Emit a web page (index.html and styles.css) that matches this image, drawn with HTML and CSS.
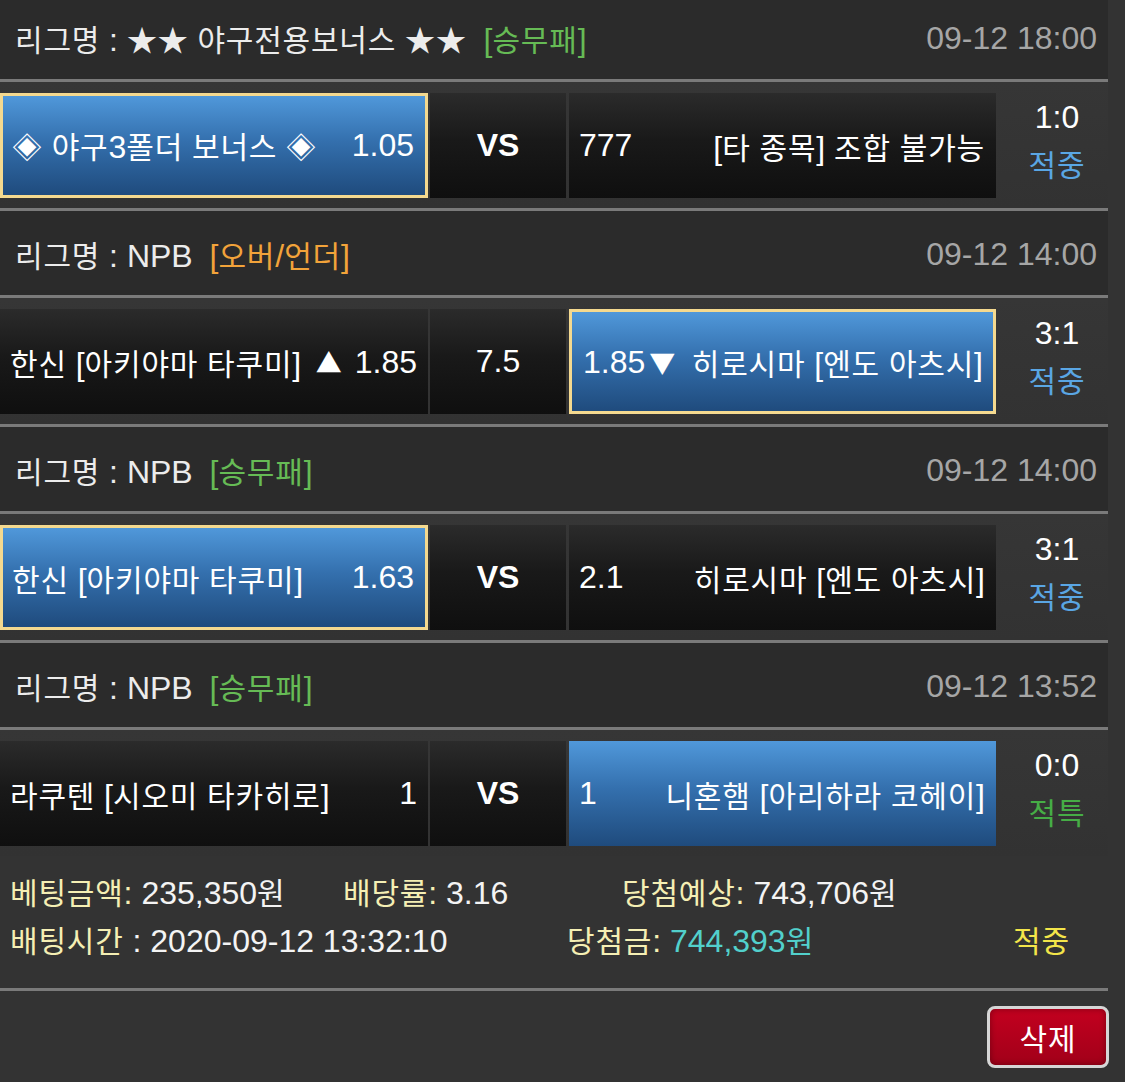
FILE: index.html
```html
<!DOCTYPE html>
<html lang="ko">
<head>
<meta charset="utf-8">
<title>배팅내역</title>
<link rel="stylesheet" href="styles.css">
</head>
<body>
<div class="slip">

  <div class="game">
    <div class="league">
      <div class="league-name"><span class="k">리그명</span> : <span class="k">★★</span> <span class="k">야구전용보너스</span> <span class="k">★★</span> <span class="tag green">[<span class="k">승무패</span>]</span></div>
      <div class="time">09-12 18:00</div>
    </div>
    <div class="match">
      <div class="cell team left blue picked">
        <span class="name"><span class="k">◈</span> <span class="k">야구</span>3<span class="k">폴더</span> <span class="k">보너스</span> <span class="k">◈</span></span>
        <span class="odd">1.05</span>
      </div>
      <div class="cell mid"><span class="vs">VS</span></div>
      <div class="cell team right">
        <span class="odd">777</span>
        <span class="name">[<span class="k">타</span> <span class="k">종목</span>] <span class="k">조합</span> <span class="k">불가능</span></span>
      </div>
      <div class="result"><div class="score">1:0</div><div class="k st hit">적중</div></div>
    </div>
  </div>

  <div class="game">
    <div class="league">
      <div class="league-name"><span class="k">리그명</span> : NPB <span class="tag orange">[<span class="k">오버</span>/<span class="k">언더</span>]</span></div>
      <div class="time">09-12 14:00</div>
    </div>
    <div class="match">
      <div class="cell team left">
        <span class="name"><span class="k">한신</span> [<span class="k">아키야마</span> <span class="k">타쿠미</span>]</span>
        <span class="odd"><span class="k tri">▲</span> 1.85</span>
      </div>
      <div class="cell mid"><span class="line">7.5</span></div>
      <div class="cell team right blue picked">
        <span class="odd">1.85<span class="k tri">▼</span></span>
        <span class="name"><span class="k">히로시마</span> [<span class="k">엔도</span> <span class="k">아츠시</span>]</span>
      </div>
      <div class="result"><div class="score">3:1</div><div class="k st hit">적중</div></div>
    </div>
  </div>

  <div class="game">
    <div class="league">
      <div class="league-name"><span class="k">리그명</span> : NPB <span class="tag green">[<span class="k">승무패</span>]</span></div>
      <div class="time">09-12 14:00</div>
    </div>
    <div class="match">
      <div class="cell team left blue picked">
        <span class="name"><span class="k">한신</span> [<span class="k">아키야마</span> <span class="k">타쿠미</span>]</span>
        <span class="odd">1.63</span>
      </div>
      <div class="cell mid"><span class="vs">VS</span></div>
      <div class="cell team right">
        <span class="odd">2.1</span>
        <span class="name"><span class="k">히로시마</span> [<span class="k">엔도</span> <span class="k">아츠시</span>]</span>
      </div>
      <div class="result"><div class="score">3:1</div><div class="k st hit">적중</div></div>
    </div>
  </div>

  <div class="game last">
    <div class="league">
      <div class="league-name"><span class="k">리그명</span> : NPB <span class="tag green">[<span class="k">승무패</span>]</span></div>
      <div class="time">09-12 13:52</div>
    </div>
    <div class="match">
      <div class="cell team left">
        <span class="name"><span class="k">라쿠텐</span> [<span class="k">시오미</span> <span class="k">타카히로</span>]</span>
        <span class="odd">1</span>
      </div>
      <div class="cell mid"><span class="vs">VS</span></div>
      <div class="cell team right blue">
        <span class="odd">1</span>
        <span class="name"><span class="k">니혼햄</span> [<span class="k">아리하라</span> <span class="k">코헤이</span>]</span>
      </div>
      <div class="result"><div class="score">0:0</div><div class="k st special">적특</div></div>
    </div>
  </div>

  <div class="summary">
    <div class="sum-line">
      <span class="c1"><span class="lab"><span class="k">베팅금액</span>:</span> 235,350<span class="k">원</span></span>
      <span class="c2"><span class="lab"><span class="k">배당률</span>:</span> 3.16</span>
      <span class="c3"><span class="lab"><span class="k">당첨예상</span>:</span> 743,706<span class="k">원</span></span>
    </div>
    <div class="sum-line">
      <span class="d1"><span class="lab"><span class="k">배팅시간</span></span> : 2020-09-12 13:32:10</span>
      <span class="d2"><span class="lab"><span class="k">당첨금</span>:</span> <span class="won">744,393<span class="k">원</span></span></span>
      <span class="d3"><span class="k">적중</span></span>
    </div>
  </div>

  <div class="footer">
    <button class="del" type="button"><span class="k">삭제</span></button>
  </div>

</div>
</body>
</html>
```

FILE: styles.css
```css
* { box-sizing: border-box; }
html, body { margin: 0; padding: 0; }
body {
  background: #333333;
  font-family: "Liberation Sans", Arial, "Noto Sans CJK KR", sans-serif;
  font-size: 32px;
  color: #f4f4f4;
  overflow: hidden;
  height: 1082px;
}
.k {
  font-family: "Noto Sans CJK KR", "Liberation Sans", sans-serif;
  font-size: 30px;
  letter-spacing: 0.8px;
}
.k.tri { font-size: 26px; letter-spacing: 0; margin: 0 4px; }
.slip {
  width: 1108px;
  margin-top: -5px;
}

/* league header */
.league {
  height: 87px;
  background: #2b2b2b;
  border-bottom: 3px solid #7a7a7a;
  display: flex;
  align-items: center;
  justify-content: space-between;
  padding: 2px 11px 0 15px;
  white-space: nowrap;
}
.league-name { color: #ececec; }
.tag { margin-left: 8px; }
.tag.green { color: #66bb55; }
.tag.orange { color: #f2a33a; }
.time { color: #a6a6a6; }

/* match row */
.match {
  height: 129px;
  padding: 11px 0 10px;
  border-bottom: 3px solid #7a7a7a;
  background: linear-gradient(#363636, #323232);
  display: flex;
  align-items: stretch;
}
.game.last .match { border-bottom: none; height: 126px; }

.cell {
  height: 105px;
  display: flex;
  align-items: center;
  justify-content: space-between;
  padding: 0 11px 0 10px;
  white-space: nowrap;
  color: #ffffff;
  background: linear-gradient(#2b2b2b 0%, #191919 45%, #0f0f0f 100%);
}
.cell.left { width: 428px; }
.cell.mid { width: 136px; margin-left: 2px; justify-content: center; padding: 0; }
.cell.right { width: 427px; margin-left: 3px; }
.cell.blue {
  background: linear-gradient(#5098da 0%, #3470ae 45%, #1f4b7d 100%);
}
.cell.picked {
  border: 3px solid #f4d98f;
  padding: 0 11px 0 9px;
}
.cell.right.picked { padding: 0 10px 0 11px; }
.vs { font-weight: bold; }

.result {
  flex: 1;
  display: flex;
  flex-direction: column;
  align-items: center;
  justify-content: center;
  padding: 0 0 12px 10px;
  line-height: 46px;
}
.score { color: #ffffff; }
.st.hit { color: #5aa6e4; }
.st.special { color: #46ad46; }

/* summary */
.summary {
  height: 135px;
  padding: 12px 0 0 10px;
  border-bottom: 3px solid #7a7a7a;
  line-height: 46px;
  white-space: nowrap;
}
.sum-line { display: flex; }
.lab { color: #f5efb4; }
.c1 { width: 333px; }
.c2 { width: 279px; }
.d1 { width: 557px; }
.d2 { width: 446px; }
.won { color: #52d0cc; }
.d3 { color: #f3e54a; }

/* footer */
.footer {
  display: flex;
  justify-content: flex-end;
  padding-top: 15px;
}
.del {
  width: 122px;
  height: 62px;
  margin-right: -1px;
  border: 3px solid #d6d6d6;
  border-radius: 8px;
  background: linear-gradient(#c3001f, #a10019);
  box-shadow: inset 0 0 6px rgba(0, 0, 0, 0.35);
  color: #ffffff;
  padding: 0;
  display: flex;
  align-items: center;
  justify-content: center;
}
```
